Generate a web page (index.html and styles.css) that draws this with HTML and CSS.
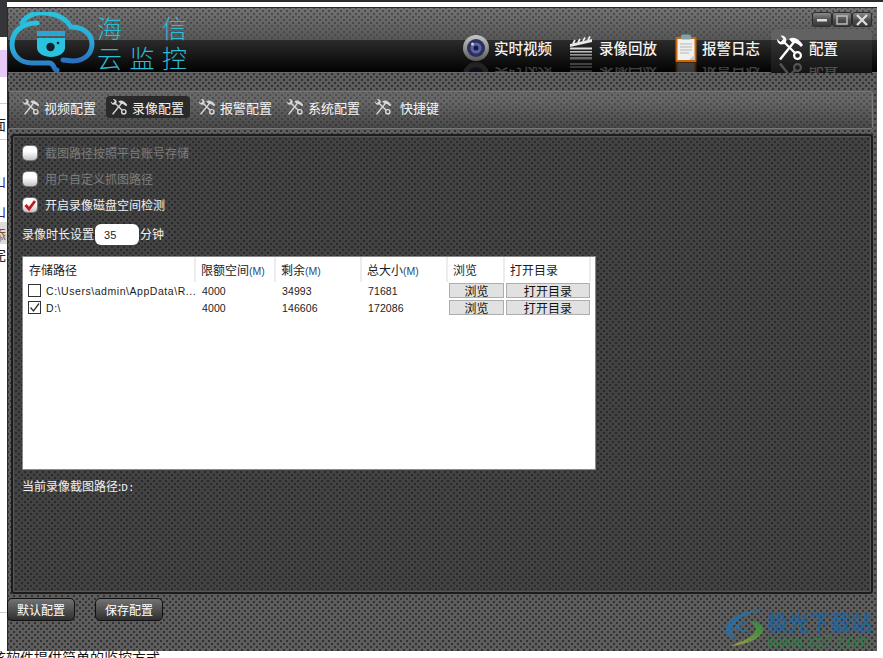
FILE: index.html
```html
<!DOCTYPE html>
<html lang="zh">
<head>
<meta charset="utf-8">
<title>海信云监控</title>
<link rel="stylesheet" href="styles.css">
</head>
<body>
<svg class="defs" width="0" height="0">
  <defs>
    <symbol id="tools" viewBox="0 0 28 28">
      <path d="M4 25.500 L18 8" stroke="currentColor" stroke-width="2.400" fill="none"/>
      <path d="M13 5 Q20 1 27 11 L25 13 Q21 8.500 17.500 9 L15.500 8 Z" fill="currentColor"/>
      <path d="M8 8 L19 19" stroke="currentColor" stroke-width="2.200" fill="none"/>
      <path d="M1 5 L4.500 8 L7.500 5 L4.500 1.500 Q9.500 1 10.500 6 L9 10 L4.500 10.500 Q1 9 1 5 Z" fill="currentColor"/>
      <circle cx="21.500" cy="21.500" r="3.400" fill="none" stroke="currentColor" stroke-width="2.200"/>
    </symbol>
    <linearGradient id="cloudgrad" x1="0" y1="0" x2="0" y2="1">
      <stop offset="0" stop-color="#29c3dc"/>
      <stop offset="0.6" stop-color="#2aa8d8"/>
      <stop offset="1" stop-color="#2a6fc0"/>
    </linearGradient>
    <linearGradient id="lens" x1="0" y1="0" x2="0" y2="1">
      <stop offset="0" stop-color="#c8c8c8"/>
      <stop offset="1" stop-color="#5a5a5a"/>
    </linearGradient>
    <linearGradient id="wmgreen" x1="1" y1="0" x2="0" y2="1">
      <stop offset="0" stop-color="#1f9a3c"/>
      <stop offset="1" stop-color="#b8b43a"/>
    </linearGradient>
  </defs>
</svg>

<main class="desktop">
  <div class="bg-top"></div>
  <div class="bg-corner"></div>
  <div class="bg-purple"></div>
  <div class="bg-line bg-line-a"></div>
  <div class="bg-line bg-line-b"></div>
  <div class="bg-line bg-line-c"></div>
  <div class="bg-grey"></div>
  <span class="bg-glyph bg-glyph-a">面</span>
  <span class="bg-glyph bg-glyph-b">山</span>
  <span class="bg-glyph bg-glyph-c">山</span>
  <span class="bg-glyph bg-glyph-d">添</span>
  <span class="bg-glyph bg-glyph-e">完</span>
  <span class="bg-foot">该软件提供简单的监控方式</span>

  <section class="window">
    <header class="titlebar">
      <div class="brand">
        <svg class="logo" width="90" height="66" viewBox="0 0 90 66">
          <g fill="none" stroke="url(#cloudgrad)" stroke-width="5" stroke-linecap="round">
            <path d="M29 11 C14 11 4 20 4 32 C4 44 13 51 24 51 L41 51 C47 51 45 58 49 58"/>
            <path d="M14 11 C18 3 30 -1 41 1.500 C51 3 59 8 63 15 C75 15 84 22 84 32 C84 42 76 49 65 49 L55 48"/>
          </g>
          <rect x="29" y="19" width="28" height="5" fill="#2aa5d4"/>
          <path d="M29 26 H57 V36 C57 41 50 45 43 45 C36 45 29 41 29 36 Z" fill="#2ac3df"/>
          <circle cx="42.500" cy="35" r="4.200" fill="#15202a"/>
          <circle cx="50" cy="31" r="1.300" fill="#15202a"/>
        </svg>
        <div class="brand-name">
          <span>海</span><span></span><span>信</span>
          <span>云</span><span>监</span><span>控</span>
        </div>
      </div>

      <div class="win-controls">
        <span class="win-btn"><svg width="14" height="10" viewBox="0 0 14 10"><rect x="2" y="4" width="10" height="2.500" fill="#ddd"/></svg></span>
        <span class="win-btn"><svg width="14" height="10" viewBox="0 0 14 10"><rect x="2" y="1" width="10" height="8" fill="none" stroke="#bbb" stroke-width="1.500"/></svg></span>
        <span class="win-btn"><svg width="14" height="12" viewBox="0 0 14 12"><path d="M2 1 L12 11 M12 1 L2 11" stroke="#ddd" stroke-width="2.400"/></svg></span>
      </div>

      <nav class="topnav">
        <div class="topitem item-video">
          <div class="top-face">
            <svg class="ticon" width="28" height="28" viewBox="0 0 28 28">
              <circle cx="14" cy="14" r="13" fill="url(#lens)"/>
              <circle cx="14" cy="14" r="9" fill="#2d2f5c"/>
              <circle cx="14" cy="14" r="5.500" fill="#5c64a8"/>
              <circle cx="14" cy="14" r="2.500" fill="#171a38"/>
              <circle cx="10.500" cy="10" r="1.500" fill="#c9d0ee"/>
            </svg>
            <span class="toplabel">实时视频</span>
          </div>
          <div class="top-face reflect" aria-hidden="true">
            <svg class="ticon" width="28" height="28" viewBox="0 0 28 28"><circle cx="14" cy="14" r="13" fill="url(#lens)"/><circle cx="14" cy="14" r="8" fill="#2d2f5c"/></svg>
            <span class="toplabel">实时视频</span>
          </div>
        </div>

        <div class="topitem item-replay">
          <div class="top-face">
            <svg class="ticon" width="24" height="26" viewBox="0 0 24 26">
              <path d="M1 12 L23 7 L23 4 L1 9 Z" fill="#e8e8e8"/>
              <path d="M4 8.500 L6 5 M9 7.500 L11 4 M14 6 L16 2.500 M19 5 L21 1.500" stroke="#eee" stroke-width="1.700"/>
              <rect x="1" y="12.500" width="22" height="2" fill="#ddd"/>
              <rect x="1" y="16" width="22" height="1.600" fill="#bbb"/>
              <rect x="1" y="19" width="22" height="1.600" fill="#999"/>
              <rect x="1" y="22" width="22" height="2.500" fill="#666"/>
            </svg>
            <span class="toplabel">录像回放</span>
          </div>
          <div class="top-face reflect" aria-hidden="true">
            <svg class="ticon" width="24" height="26" viewBox="0 0 24 26"><rect x="1" y="16" width="22" height="2" fill="#999"/><rect x="1" y="20" width="22" height="2" fill="#bbb"/><rect x="1" y="23" width="22" height="2" fill="#ddd"/></svg>
            <span class="toplabel">录像回放</span>
          </div>
        </div>

        <div class="topitem item-log">
          <div class="top-face">
            <svg class="ticon" width="22" height="28" viewBox="0 0 22 28">
              <rect x="0.500" y="3" width="21" height="25" rx="1.500" fill="#c9690f"/>
              <rect x="2.500" y="5" width="17" height="21" fill="#f0f0f0"/>
              <rect x="6" y="0.500" width="10" height="5" rx="1.500" fill="#7fa4a8"/>
              <path d="M5 10 H17 M5 13 H17 M5 16 H17 M5 19 H14" stroke="#b5b5b5" stroke-width="1"/>
              <path d="M14 26 L19.500 21 V26 Z" fill="#c8c8c8"/>
            </svg>
            <span class="toplabel">报警日志</span>
          </div>
          <div class="top-face reflect" aria-hidden="true">
            <svg class="ticon" width="22" height="28" viewBox="0 0 22 28"><rect x="0.500" y="3" width="21" height="25" fill="#c9690f"/><rect x="2.500" y="5" width="17" height="21" fill="#ddd"/></svg>
            <span class="toplabel">报警日志</span>
          </div>
        </div>

        <div class="topitem item-config">
          <div class="top-face">
            <svg class="ticon" width="28" height="28"><use href="#tools"/></svg>
            <span class="toplabel">配置</span>
          </div>
          <div class="top-face reflect" aria-hidden="true">
            <svg class="ticon" width="28" height="28"><use href="#tools"/></svg>
            <span class="toplabel">配置</span>
          </div>
        </div>
      </nav>
    </header>

    <div class="band"></div>

    <nav class="subnav">
      <div class="subitem"><svg class="subicon" width="18" height="18"><use href="#tools"/></svg><span>视频配置</span></div>
      <div class="subitem is-active"><svg class="subicon" width="18" height="18"><use href="#tools"/></svg><span>录像配置</span></div>
      <div class="subitem"><svg class="subicon" width="18" height="18"><use href="#tools"/></svg><span>报警配置</span></div>
      <div class="subitem"><svg class="subicon" width="18" height="18"><use href="#tools"/></svg><span>系统配置</span></div>
      <div class="subitem sub-keys"><svg class="subicon" width="18" height="18"><use href="#tools"/></svg><span>快捷键</span></div>
    </nav>

    <section class="panel">
      <div class="check-row is-off"><span class="gloss"></span><span>截图路径按照平台账号存储</span></div>
      <div class="check-row is-off"><span class="gloss"></span><span>用户自定义抓图路径</span></div>
      <div class="check-row"><span class="gloss"><svg width="14" height="14" viewBox="0 0 14 14"><path d="M2.500 7 L6 11 L12 3" fill="none" stroke="#c8161d" stroke-width="2.800"/></svg></span><span>开启录像磁盘空间检测</span></div>

      <div class="duration">
        <span>录像时长设置</span>
        <span class="minutes">35</span>
        <span>分钟</span>
      </div>

      <div class="table">
        <div class="thead">
          <div class="th">存储路径</div>
          <div class="th">限额空间<em>(M)</em></div>
          <div class="th">剩余<em>(M)</em></div>
          <div class="th">总大小<em>(M)</em></div>
          <div class="th">浏览</div>
          <div class="th">打开目录</div>
        </div>
        <div class="trow">
          <div class="td td-path"><span class="box"></span><span class="path">C:\Users\admin\AppData\R...</span></div>
          <div class="td">4000</div>
          <div class="td">34993</div>
          <div class="td">71681</div>
          <div class="btn-cell"><span class="tbtn">浏览</span></div>
          <div class="btn-cell"><span class="tbtn">打开目录</span></div>
        </div>
        <div class="trow">
          <div class="td td-path"><span class="box"><svg width="11" height="11" viewBox="0 0 11 11"><path d="M1.500 5.500 L4.500 9 L10 1.500" fill="none" stroke="#333" stroke-width="1.300"/></svg></span><span class="path">D:\</span></div>
          <div class="td">4000</div>
          <div class="td">146606</div>
          <div class="td">172086</div>
          <div class="btn-cell"><span class="tbtn">浏览</span></div>
          <div class="btn-cell"><span class="tbtn">打开目录</span></div>
        </div>
      </div>

      <p class="current">当前录像截图路径:<span class="mono">D:</span></p>
    </section>

    <footer class="actions">
      <span class="act-btn">默认配置</span>
      <span class="act-btn">保存配置</span>
    </footer>

    <div class="watermark">
      <svg class="wm-logo" width="42" height="38" viewBox="0 0 44 40">
        <path d="M38 1 C22 1 4 8 1 20 C0 27 6 31 12 32 C7 28 5 23 9 17 C14 9 26 4 38 1 Z" fill="#1f74b8"/>
        <path d="M10 22 C10 16 18 13 24 14 C18 15 14 18 15 22 C16 25 22 25 25 22 L18 22 Z" fill="#1f74b8"/>
        <path d="M24 13 C34 12 40 17 40 22 C38 31 24 37 6 39 C16 34 27 31 31 25 C34 20 31 15 24 13 Z" fill="url(#wmgreen)"/>
      </svg>
      <div class="wm-text">
        <span class="wm-cn">极光下载站</span>
        <span class="wm-url">www.xz7.com</span>
      </div>
    </div>
  </section>
</main>
</body>
</html>
```

FILE: styles.css
```css
* { box-sizing: border-box; }
html, body { margin: 0; padding: 0; background: #fff; }
body { width: 883px; height: 658px; overflow: hidden; font-family: "Noto Sans CJK SC", "Liberation Sans", sans-serif; }
.defs { position: absolute; }
.desktop { position: relative; width: 883px; height: 658px; overflow: hidden; background: #fff; }

/* what lies behind the window */
.bg-top { position: absolute; left: 0; top: 0; width: 883px; height: 2px; background: #2c2c2c; }
.bg-corner { position: absolute; left: 0; top: 0; width: 7px; height: 37px; background: #36363a; }
.bg-purple { position: absolute; left: 0; top: 50px; width: 7px; height: 27px; background: #e6c9f6; }
.bg-line { position: absolute; left: 0; width: 7px; height: 1px; background: #cfcfcf; }
.bg-line-a { top: 103px; }
.bg-line-b { top: 139px; }
.bg-line-c { top: 612px; }
.bg-grey { position: absolute; left: 0; top: 222px; width: 7px; height: 22px; background: #dcdcdc; }
.bg-glyph { position: absolute; left: -8px; font-size: 14px; line-height: 16px; color: #222; }
.bg-glyph-a { top: 116px; }
.bg-glyph-b { top: 172px; color: #3a1f7a; }
.bg-glyph-c { top: 202px; color: #3a1f7a; }
.bg-glyph-d { top: 226px; color: #8a4a20; }
.bg-glyph-e { top: 246px; color: #222; }
.bg-foot { position: absolute; left: -8px; top: 648px; font-size: 14px; line-height: 18px; color: #111; white-space: nowrap; }

/* window */
.window {
  position: absolute; left: 7px; top: 7px; width: 870px; height: 644px;
  display: flex; flex-direction: column;
  border-top: 1px solid #2a2a2a; border-left: 1px solid #2a2a2a;
  background:
    radial-gradient(circle, #333 1.300px, #0000 1.600px) 0 0 / 6px 6px,
    radial-gradient(circle, #333 1.300px, #0000 1.600px) 3px 3px / 6px 6px,
    #5e5e5e;
}
.titlebar {
  position: relative; height: 65px; flex: none; display: flex; justify-content: space-between;
  background:
    linear-gradient(#0000 0 32px, #2b2b2b 32px, #020202 100%),
    radial-gradient(circle, #4a4a4a 1.300px, #0000 1.600px) 0 0 / 6px 6px,
    radial-gradient(circle, #4a4a4a 1.300px, #0000 1.600px) 3px 3px / 6px 6px,
    linear-gradient(#747474, #565656 32px);
  border-bottom: 1px solid #6a6a6a;
}
.brand { display: flex; }
.logo { display: block; margin-top: 4px; flex: none; }
.brand-name {
  margin: 4px 0 0 -1px; display: grid; grid-template-columns: repeat(3, 32.500px); grid-auto-rows: 30px;
  font-size: 25px; line-height: 30px; color: #2bbcd6; font-weight: 300;
}
.win-controls { position: absolute; right: 5px; top: 4px; display: flex; }
.win-btn {
  width: 20px; height: 15px; display: flex; align-items: center; justify-content: center;
  background: linear-gradient(#8a8a8a, #4c4c4c 55%, #3a3a3a);
  border: 1px solid #2b2b2b; border-radius: 3px;
}
.topnav { display: flex; align-items: flex-start; padding: 26px 5px 0 0; height: 64px; }
.topitem { height: 38px; overflow: hidden; }
.top-face { display: flex; align-items: center; height: 28px; color: #fff; }
.ticon { flex: none; display: block; }
.toplabel { font-size: 14.500px; line-height: 20px; font-weight: 500; white-space: nowrap; color: #f2f2f2; }
.reflect { transform: scaleY(-1); opacity: 0.25; margin-top: -1px; }
.item-video { margin-right: 17px; }
.item-video .toplabel { margin-left: 4px; }
.item-replay { margin-right: 18px; }
.item-replay .toplabel { margin-left: 6px; }
.item-log { margin-right: 11px; }
.item-log .toplabel { margin-left: 5px; }
.item-config {
  width: 101px; height: 44px; margin-top: -5px; padding: 0 0 0 5px; color: #cfcfcf;
  background: linear-gradient(#626262 0 11px, #333 11px, #141414);
  border-radius: 5px 5px 0 0;
}
.item-config .toplabel { margin-left: 5px; }
.item-config .top-face:first-child { margin-top: 5px; }

.band { height: 18px; flex: none; }

.subnav {
  height: 38px; flex: none; margin-right: 4px; display: flex; align-items: center; padding: 0 0 6px 11px;
  background:
    linear-gradient(#0000 0 8px, #0000004d 100%),
    radial-gradient(circle, #4e4e4e 1.300px, #0000 1.600px) 0 0 / 6px 6px,
    radial-gradient(circle, #4e4e4e 1.300px, #0000 1.600px) 3px 3px / 6px 6px,
    #686868;
  border: 1px solid #777; border-left-color: #222; border-radius: 2px;
  color: #fff; font-size: 13px;
}
.subitem { height: 22px; width: 88px; display: flex; align-items: center; gap: 4px; padding-left: 2px; border-radius: 4px; white-space: nowrap; color: #f4f4f4; }
.subicon { flex: none; color: #d8d8d8; }
.is-active { width: 84px; margin: 0 6px 0 -2px; padding-left: 4px; background: #2a2a2a; }
.sub-keys { gap: 8px; }

.panel {
  flex: none; height: 460px; margin: 5px 4px 0 3px; padding: 4px 9px 0 9px;
  background:
    radial-gradient(circle, #2a2a2a 1.300px, #0000 1.600px) 0 0 / 6px 6px,
    radial-gradient(circle, #2a2a2a 1.300px, #0000 1.600px) 3px 3px / 6px 6px,
    #434343;
  border: 2px solid #1c1c1c; border-radius: 3px;
  box-shadow: inset 0 0 0 1px #555;
  color: #f0f0f0; font-size: 12px; line-height: 16px;
}
.check-row { height: 26px; display: flex; align-items: center; gap: 8px; padding-left: 1px; }
.is-off { color: #7c7c7c; }
.gloss {
  width: 14px; height: 14px; flex: none; border-radius: 4px; display: flex; align-items: center; justify-content: center;
  background: linear-gradient(#fff, #fff 40%, #c4c4c4);
  box-shadow: 0 0 0 1px #777;
}
.duration { height: 22px; margin-top: 5px; display: flex; align-items: center; }
.minutes {
  width: 44px; height: 21px; margin: 0 1px 0 1px; padding: 3px 0 0 9px;
  background: #fff; color: #222; border-radius: 6px; font-family: "Liberation Sans", sans-serif; font-size: 11px;
}
.table {
  margin-top: 11px; width: 574px; height: 214px; background: #fff; border: 1px solid #8a8a8a;
  color: #1c1c1c;
}
.thead, .trow { display: grid; grid-template-columns: 173px 80px 86px 86px 57px 86px; }
.thead { height: 25px; }
.th { padding-left: 5px; line-height: 26px; border-right: 2px solid #ededed; height: 25px; white-space: nowrap; }
.th:first-child { padding-left: 6px; }
.th em { font-style: normal; font-family: "Liberation Sans", sans-serif; font-size: 10.500px; color: #2a4a7a; }
.trow { height: 17px; align-items: center; font-family: "Liberation Sans", "Noto Sans CJK SC", sans-serif; font-size: 10.500px; letter-spacing: 0.100px; }
.td { padding-left: 6px; white-space: nowrap; }
.td-path { display: flex; align-items: center; padding-left: 5px; gap: 5px; }
.box { width: 13px; height: 13px; flex: none; border: 1px solid #333; display: flex; align-items: center; justify-content: center; background: #fff; }
.path { letter-spacing: 0.550px; }
.btn-cell { padding-left: 1px; }
.tbtn {
  display: block; width: 55px; height: 15px; background: #e1e1e1; border: 1px solid #adadad;
  font-family: "Noto Sans CJK SC", sans-serif; font-size: 12px; line-height: 13px; text-align: center; color: #111;
}
.btn-cell:last-child .tbtn { width: 84px; }
.current { margin: 7px 0 0 0; line-height: 18px; color: #f0f0f0; }
.mono { font-family: "Liberation Mono", monospace; font-size: 11px; }

.actions { display: flex; gap: 20px; padding: 4px 0 0 0; margin-left: -1px; }
.act-btn {
  width: 68px; height: 23px; text-align: center; font-size: 12px; line-height: 21px; color: #fff;
  background: linear-gradient(#737373, #2f2f2f);
  border: 1px solid #111; border-radius: 5px;
}

.watermark { position: absolute; left: 717px; top: 601px; display: flex; gap: 0; opacity: 0.75; }
.wm-logo { display: block; flex: none; }
.wm-text { display: flex; flex-direction: column; width: 108px; }
.wm-cn { font-size: 21px; line-height: 25px; font-weight: 700; color: #1766a8; white-space: nowrap; letter-spacing: 0; }
.wm-url { font-family: "Liberation Sans", sans-serif; font-size: 16px; line-height: 16px; color: #1d8b3b; letter-spacing: 0.400px; white-space: nowrap; }
```
